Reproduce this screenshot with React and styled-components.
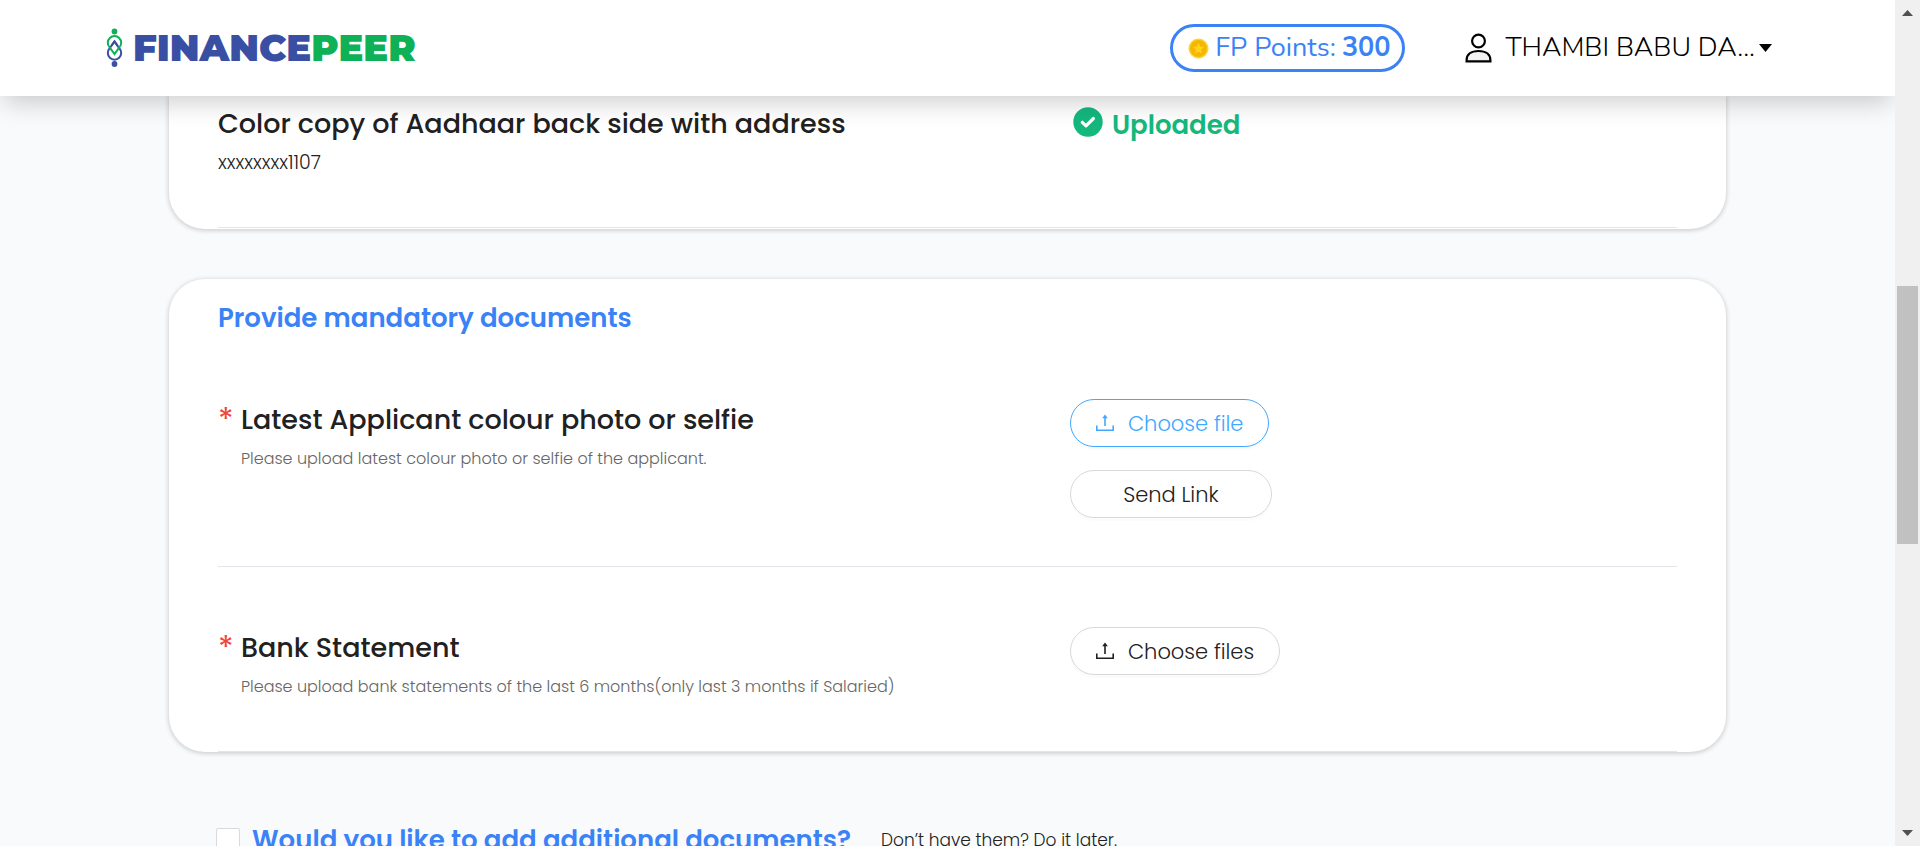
import React from "react";
import styled, { createGlobalStyle, css } from "styled-components";

const GlobalStyle = createGlobalStyle`
  *, *::before, *::after { box-sizing: border-box; }
  body {
    margin: 0;
    background: #f9fafc;
    color: #212121;
    font-family: Poppins, Inter, "Liberation Sans", sans-serif;
  }
  h2, h3, p { margin: 0; }
`;

const Shell = styled.div`
  display: flex;
  height: 100vh;
  overflow: hidden;
`;

const Page = styled.div`
  display: flex;
  flex: 1;
  flex-direction: column;
  min-width: 0;
  overflow: hidden;
`;

const Header = styled.header`
  position: relative;
  z-index: 1;
  display: flex;
  flex: none;
  align-items: center;
  height: 96px;
  padding: 0 123px 0 105px;
  background: #fff;
  box-shadow: 0 10px 24px -4px rgba(0, 0, 0, 0.2);
`;

const Brand = styled.a`
  display: flex;
  align-items: center;
  gap: 10px;
  margin-right: auto;
  color: #384fa3;
  font: 900 37px/44px Montserrat, Inter, sans-serif;
  text-decoration: none;
`;

const BrandAccent = styled.span`
  color: #0fb157;
`;

const headerText = css`
  font-family: Nunito, "Noto Sans", sans-serif;
  font-size: 27px;
  font-weight: 300;
  line-height: 40px;
  white-space: nowrap;
`;

const Points = styled.div`
  ${headerText}
  display: flex;
  align-items: center;
  height: 48px;
  margin-right: 60px;
  padding: 0 12px 0 15px;
  border: 3px solid #3b82f6;
  border-radius: 24px;
  color: #3b82f6;
  font-weight: 400;

  svg { margin-right: 6px; }
  strong { margin-left: 6px; font-weight: 700; }
`;

const Account = styled.button`
  ${headerText}
  display: flex;
  align-items: center;
  padding: 0;
  border: 0;
  background: none;
  color: #000;

  svg:first-child { margin-right: 13px; }
  svg:last-child { margin-left: 4px; }
`;

const Content = styled.main`
  padding: 0 169px;
`;

const Card = styled.section`
  margin-bottom: 50px;
  padding: ${(p) => (p.$continued ? "7px 49px 1px" : "21px 49px 0")};
  border-radius: ${(p) => (p.$continued ? "0 0 36px 36px" : "36px")};
  background: #fff;
  box-shadow: 0 1px 4px 1px rgba(0, 0, 0, 0.16);
`;

const SectionTitle = styled.h2`
  font-size: 26px;
  font-weight: 600;
  line-height: 36px;
  color: #3b82f6;
`;

const CardTitle = styled(SectionTitle)`
  margin-bottom: 3px;
`;

const DocumentRow = styled.div`
  display: grid;
  grid-template-columns: 7fr 5fr;
  column-gap: 2px;
  padding: ${(p) => (p.$first ? "0 0 48px" : "60px 0 48px")};
  border-bottom: 1px solid #e4e5ea;
`;

const DocumentInfo = styled.div`
  position: relative;
  min-height: 76px;
  padding: 3px 0 0 ${(p) => (p.$required ? "23px" : "0")};
`;

const Required = styled.span`
  position: absolute;
  left: 0;
  color: #f04438;
  font-size: 32px;
  line-height: 36px;
`;

const DocumentName = styled.h3`
  font-size: 27px;
  font-weight: 500;
  line-height: 36px;
`;

const Hint = styled.p`
  margin-top: 9px;
  color: #666;
  font-size: 16px;
  font-weight: 300;
  line-height: 24px;
`;

const MaskedNumber = styled(Hint)`
  color: #212121;
  font-size: 19px;
`;

const Actions = styled.div`
  display: flex;
  flex-direction: column;
  align-items: flex-start;
  gap: 23px;
`;

const Status = styled.p`
  display: flex;
  align-items: flex-start;
  gap: 9px;
  padding: 4px 0 0 3px;
  color: #14b87d;
  font-size: 26px;
  font-weight: 600;
  line-height: 36px;
`;

const PillButton = styled.button`
  display: flex;
  align-items: center;
  justify-content: center;
  gap: 14px;
  height: 48px;
  min-width: ${(p) => (p.$wide ? "202px" : "0")};
  padding: 0 25px;
  border: 1px solid ${(p) => (p.$active ? "#40a9ff" : "#d9d9d9")};
  border-radius: 24px;
  background: #fff;
  box-shadow: 0 3px 1px rgba(0, 0, 0, 0.015);
  color: ${(p) => (p.$active ? "#40a9ff" : "#212121")};
  font-family: inherit;
  font-size: 21px;
  font-weight: 300;
`;

const Additional = styled.div`
  display: flex;
  align-items: center;
  margin-top: 70px;
  padding-left: 47px;
`;

const AdditionalLabel = styled.label`
  display: flex;
  align-items: center;
  gap: 12px;
`;

const Checkbox = styled.input`
  width: 24px;
  height: 24px;
  margin: 0;
  appearance: none;
  border: 1px solid #d9d9d9;
  border-radius: 2px;
  background: #fff;
`;

const Later = styled.p`
  margin-left: 30px;
  font-size: 17px;
  font-weight: 300;
  line-height: 24px;
`;

const ScrollRail = styled.div`
  display: flex;
  flex: none;
  flex-direction: column;
  align-items: center;
  width: 25px;
  padding: 10px 0;
  background: #f0f0f0;
`;

const ScrollTrack = styled.div`
  display: grid;
  flex: 1;
  grid-template-rows: 270fr 258fr 286fr;
  width: 21px;
`;

const ScrollThumb = styled.div`
  grid-row: 2;
  background: #c1c1c1;
`;

const BrandMark = () => (
  <svg width="18" height="40" viewBox="0 0 18 40" fill="none" strokeWidth="2">
    <circle cx="9.5" cy="3.5" r="2.9" fill="#0fb157" />
    <circle cx="9.5" cy="36" r="2.9" fill="#384fa3" />
    <path d="M4.500 20.500L9.500 13.500l5 7a6.700 6.700 0 1 1-10 0z" stroke="#384fa3" />
    <path d="M4.500 19.200a6.700 6.700 0 1 1 10 0L9.500 26z" stroke="#0fb157" />
    <path d="M6.500 17.700L9.500 13.500l3 4.200" stroke="#384fa3" />
  </svg>
);

const Coin = () => (
  <svg width="21" height="21" viewBox="0 0 21 21">
    <circle cx="10.500" cy="10.500" r="10" fill="#fcd72a" />
    <circle cx="10.500" cy="10.500" r="8.500" fill="#f7b500" />
    <path d="M10.500 5l1.700 3.500 3.800.5-2.800 2.700.7 3.800-3.400-1.800-3.400 1.800.7-3.800L5 9l3.800-.5z" fill="#ffd21c" />
  </svg>
);

const UserIcon = () => (
  <svg width="27" height="30" viewBox="0 0 27 30" fill="none" stroke="#000" strokeWidth="2.200">
    <circle cx="13.500" cy="8" r="6.400" />
    <path d="M1.600 28.400v-1C1.600 21.500 6 18 13.500 18s11.900 3.500 11.900 9.400v1z" fill="#f3f3f3" />
  </svg>
);

const Caret = () => (
  <svg width="13" height="8" viewBox="0 0 13 8">
    <path d="M0 0h13L6.500 8z" />
  </svg>
);

const CheckCircle = () => (
  <svg width="30" height="30" viewBox="0 0 30 30">
    <circle cx="15" cy="15" r="14.700" fill="#14b87d" />
    <path d="M9.300 15.300l3.700 3.600 7.400-7.400" fill="none" stroke="#fff" strokeWidth="3.200" strokeLinecap="round" strokeLinejoin="round" />
  </svg>
);

const UploadIcon = () => (
  <svg width="18" height="18" viewBox="0 0 18 18" fill="none" stroke="currentColor" strokeWidth="1.600">
    <path d="M.8 11.500v4.700h16.400v-4.700M9 12V3" />
    <path d="M9 .5l2.800 3.700H6.200z" fill="currentColor" stroke="none" />
  </svg>
);

const ScrollArrow = ({ down }) => (
  <svg width="11" height="6" viewBox="0 0 11 6">
    <path d={down ? "M0 0h11L5.500 6z" : "M0 6h11L5.500 0z"} fill="#505050" />
  </svg>
);

export default function App() {
  return (
    <Shell>
      <GlobalStyle />
      <Page>
        <Header>
          <Brand href="#">
            <BrandMark />
            <span>
              FINANCE<BrandAccent>PEER</BrandAccent>
            </span>
          </Brand>
          <Points>
            <Coin />
            FP Points: <strong>300</strong>
          </Points>
          <Account type="button">
            <UserIcon />
            THAMBI BABU DA...
            <Caret />
          </Account>
        </Header>

        <Content>
          <Card $continued>
            <DocumentRow $first>
              <DocumentInfo>
                <DocumentName>Color copy of Aadhaar back side with address</DocumentName>
                <MaskedNumber>xxxxxxxx1107</MaskedNumber>
              </DocumentInfo>
              <Actions>
                <Status>
                  <CheckCircle />
                  Uploaded
                </Status>
              </Actions>
            </DocumentRow>
          </Card>

          <Card>
            <CardTitle>Provide mandatory documents</CardTitle>
            <DocumentRow>
              <DocumentInfo $required>
                <Required>*</Required>
                <DocumentName>Latest Applicant colour photo or selfie</DocumentName>
                <Hint>Please upload latest colour photo or selfie of the applicant.</Hint>
              </DocumentInfo>
              <Actions>
                <PillButton type="button" $active>
                  <UploadIcon />
                  Choose file
                </PillButton>
                <PillButton type="button" $wide>
                  Send Link
                </PillButton>
              </Actions>
            </DocumentRow>
            <DocumentRow>
              <DocumentInfo $required>
                <Required>*</Required>
                <DocumentName>Bank Statement</DocumentName>
                <Hint>Please upload bank statements of the last 6 months(only last 3 months if Salaried)</Hint>
              </DocumentInfo>
              <Actions>
                <PillButton type="button">
                  <UploadIcon />
                  Choose files
                </PillButton>
              </Actions>
            </DocumentRow>
          </Card>

          <Additional>
            <AdditionalLabel>
              <Checkbox type="checkbox" />
              <SectionTitle as="span">Would you like to add additional documents?</SectionTitle>
            </AdditionalLabel>
            <Later>Don’t have them? Do it later.</Later>
          </Additional>
        </Content>
      </Page>

      <ScrollRail aria-hidden="true">
        <ScrollArrow />
        <ScrollTrack>
          <ScrollThumb />
        </ScrollTrack>
        <ScrollArrow down />
      </ScrollRail>
    </Shell>
  );
}
